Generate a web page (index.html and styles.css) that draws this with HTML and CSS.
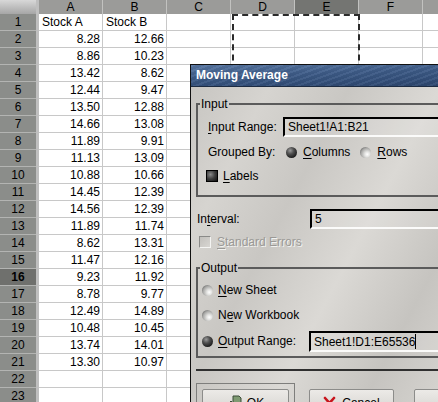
FILE: index.html
```html
<!DOCTYPE html>
<html>
<head>
<meta charset="utf-8">
<link rel="stylesheet" href="styles.css">
</head>
<body>
<div class="sheet">
  <div class="corner"></div><div class="gp"></div>
  <div class="ch">A</div><div class="ch">B</div><div class="ch">C</div><div class="ch">D</div><div class="ch sel">E</div><div class="ch">F</div><div class="ch">G</div>

  <div class="rh">1</div><div class="gp"></div><div class="c">Stock A</div><div class="c">Stock B</div><div class="c"></div><div class="c"></div><div class="c"></div><div class="c"></div><div class="c"></div>
  <div class="rh">2</div><div class="gp"></div><div class="c n">8.28</div><div class="c n">12.66</div><div class="c"></div><div class="c"></div><div class="c"></div><div class="c"></div><div class="c"></div>
  <div class="rh">3</div><div class="gp"></div><div class="c n">8.86</div><div class="c n">10.23</div><div class="c"></div><div class="c"></div><div class="c"></div><div class="c"></div><div class="c"></div>
  <div class="rh">4</div><div class="gp"></div><div class="c n">13.42</div><div class="c n">8.62</div><div class="c"></div><div class="c"></div><div class="c"></div><div class="c"></div><div class="c"></div>
  <div class="rh">5</div><div class="gp"></div><div class="c n">12.44</div><div class="c n">9.47</div><div class="c"></div><div class="c"></div><div class="c"></div><div class="c"></div><div class="c"></div>
  <div class="rh">6</div><div class="gp"></div><div class="c n">13.50</div><div class="c n">12.88</div><div class="c"></div><div class="c"></div><div class="c"></div><div class="c"></div><div class="c"></div>
  <div class="rh">7</div><div class="gp"></div><div class="c n">14.66</div><div class="c n">13.08</div><div class="c"></div><div class="c"></div><div class="c"></div><div class="c"></div><div class="c"></div>
  <div class="rh">8</div><div class="gp"></div><div class="c n">11.89</div><div class="c n">9.91</div><div class="c"></div><div class="c"></div><div class="c"></div><div class="c"></div><div class="c"></div>
  <div class="rh">9</div><div class="gp"></div><div class="c n">11.13</div><div class="c n">13.09</div><div class="c"></div><div class="c"></div><div class="c"></div><div class="c"></div><div class="c"></div>
  <div class="rh">10</div><div class="gp"></div><div class="c n">10.88</div><div class="c n">10.66</div><div class="c"></div><div class="c"></div><div class="c"></div><div class="c"></div><div class="c"></div>
  <div class="rh">11</div><div class="gp"></div><div class="c n">14.45</div><div class="c n">12.39</div><div class="c"></div><div class="c"></div><div class="c"></div><div class="c"></div><div class="c"></div>
  <div class="rh">12</div><div class="gp"></div><div class="c n">14.56</div><div class="c n">12.39</div><div class="c"></div><div class="c"></div><div class="c"></div><div class="c"></div><div class="c"></div>
  <div class="rh">13</div><div class="gp"></div><div class="c n">11.89</div><div class="c n">11.74</div><div class="c"></div><div class="c"></div><div class="c"></div><div class="c"></div><div class="c"></div>
  <div class="rh">14</div><div class="gp"></div><div class="c n">8.62</div><div class="c n">13.31</div><div class="c"></div><div class="c"></div><div class="c"></div><div class="c"></div><div class="c"></div>
  <div class="rh">15</div><div class="gp"></div><div class="c n">11.47</div><div class="c n">12.16</div><div class="c"></div><div class="c"></div><div class="c"></div><div class="c"></div><div class="c"></div>
  <div class="rh sel">16</div><div class="gp"></div><div class="c n">9.23</div><div class="c n">11.92</div><div class="c"></div><div class="c"></div><div class="c"></div><div class="c"></div><div class="c"></div>
  <div class="rh">17</div><div class="gp"></div><div class="c n">8.78</div><div class="c n">9.77</div><div class="c"></div><div class="c"></div><div class="c"></div><div class="c"></div><div class="c"></div>
  <div class="rh">18</div><div class="gp"></div><div class="c n">12.49</div><div class="c n">14.89</div><div class="c"></div><div class="c"></div><div class="c"></div><div class="c"></div><div class="c"></div>
  <div class="rh">19</div><div class="gp"></div><div class="c n">10.48</div><div class="c n">10.45</div><div class="c"></div><div class="c"></div><div class="c"></div><div class="c"></div><div class="c"></div>
  <div class="rh">20</div><div class="gp"></div><div class="c n">13.74</div><div class="c n">14.01</div><div class="c"></div><div class="c"></div><div class="c"></div><div class="c"></div><div class="c"></div>
  <div class="rh">21</div><div class="gp"></div><div class="c n">13.30</div><div class="c n">10.97</div><div class="c"></div><div class="c"></div><div class="c"></div><div class="c"></div><div class="c"></div>
  <div class="rh">22</div><div class="gp"></div><div class="c"></div><div class="c"></div><div class="c"></div><div class="c"></div><div class="c"></div><div class="c"></div><div class="c"></div>
  <div class="rh">23</div><div class="gp"></div><div class="c"></div><div class="c"></div><div class="c"></div><div class="c"></div><div class="c"></div><div class="c"></div><div class="c"></div>
</div>

<div class="marquee"></div>

<div class="dialog">
  <div class="titlebar">Moving Average</div>
  <div class="dbody">
    <fieldset class="frame">
      <legend>Input</legend>
      <div class="fin">
        <div class="frow">
          <span class="lbl w-ir"><u>I</u>nput Range:</span>
          <div class="field">Sheet1!A1:B21</div>
        </div>
        <div class="frow">
          <span class="lbl w-gb">Grouped By:</span>
          <span class="radio on"></span><span class="rtext"><u>C</u>olumns</span>
          <span class="radio off"></span><span class="rtext"><u>R</u>ows</span>
        </div>
        <div class="frow labels">
          <span class="check checked"></span><span class="ctext"><u>L</u>abels</span>
        </div>
      </div>
    </fieldset>

    <div class="frow interval">
      <span class="lbl w-iv">In<u>t</u>erval:</span>
      <div class="field">5</div>
    </div>
    <div class="frow stderr">
      <span class="check disabled"></span><span class="ctext dis"><u>S</u>tandard Errors</span>
    </div>

    <fieldset class="frame out">
      <legend>Output</legend>
      <div class="fout">
        <div class="frow">
          <span class="radio off"></span><span class="otext"><u>N</u>ew Sheet</span>
        </div>
        <div class="frow">
          <span class="radio off"></span><span class="otext">N<u>e</u>w Workbook</span>
        </div>
        <div class="frow last">
          <span class="radio on"></span><span class="otext w-or"><u>O</u>utput Range:</span>
          <div class="field tall">Sheet1!D1:E65536<span class="caret"></span></div>
        </div>
      </div>
    </fieldset>

    <div class="sep"></div>

    <div class="buttons">
      <div class="default-frame">
        <div class="btn ok">
          <svg width="16" height="16" viewBox="0 0 16 16"><path d="M6 1h6l2 2v9H6z" fill="#7f9a72" stroke="#3d4d38" stroke-width="1"/><path d="M1 9l3-3 2 2v6H2z" fill="#9bb38d" stroke="#3d4d38" stroke-width="1"/></svg>
          <span>OK</span>
        </div>
      </div>
      <div class="btn cancel">
        <svg width="13" height="14" viewBox="0 0 13 14"><path d="M2 2l9 10M11 2L2 12" stroke="#c8141c" stroke-width="2.6" stroke-linecap="round"/></svg>
        <span>Cancel</span>
      </div>
      <div class="btn third"></div>
    </div>
  </div>
</div>
</body>
</html>
```

FILE: styles.css
```css
html, body {
  margin: 0;
  padding: 0;
  overflow: hidden;
  background: #fff;
}
body {
  width: 438px;
  height: 402px;
  position: relative;
  font-family: "Liberation Sans", Arial, sans-serif;
  font-size: 12px;
  color: #000;
}

/* ---------- spreadsheet ---------- */
.sheet {
  display: grid;
  grid-template-columns: 36px 3px repeat(7, 64px);
  grid-template-rows: 14px;
  grid-auto-rows: 17px;
}
.corner {
  background: linear-gradient(#d8d8d8, #a6a6a6);
}
.gp {
  background: #bfbfbf;
}
.ch {
  background: #9b9b99;
  border-right: 1px solid #c2c2c0;
  text-align: center;
  line-height: 14px;
  box-sizing: border-box;
}
.ch.sel {
  background: #747572;
}
.rh {
  background: #8b8d8a;
  border-bottom: 1px solid #b3b4b2;
  text-align: center;
  line-height: 16px;
  box-sizing: border-box;
}
.rh.sel {
  background: #6f706d;
  font-weight: bold;
}
.c {
  border-right: 1px solid #c8c8c8;
  border-bottom: 1px solid #c8c8c8;
  box-sizing: border-box;
  line-height: 16px;
  padding: 0 2px 0 3px;
  white-space: nowrap;
  overflow: hidden;
}
.c.n {
  text-align: right;
}

.marquee {
  position: absolute;
  left: 232px;
  top: 14px;
  width: 128px;
  height: 400px;
  box-sizing: border-box;
  border: 2px dashed #2b2b2b;
}

/* ---------- dialog ---------- */
.dialog {
  position: absolute;
  left: 190px;
  top: 64px;
  width: 300px;
  height: 380px;
  overflow: hidden;
  border-left: 1px solid #111;
  border-top: 1px solid #111;
  background: linear-gradient(118deg, #c5c3bf 0%, #d6d4d0 18%, #c9c7c3 34%, #dbd9d5 52%, #c6c4c0 70%, #d6d4d0 86%, #cac8c4 100%);
}
.titlebar {
  height: 21px;
  border-bottom: 1px solid #1c2b42;
  background:
    repeating-linear-gradient(160deg, rgba(255,255,255,0.05) 0 2px, rgba(0,0,0,0.05) 2px 5px),
    linear-gradient(178deg, #5877a3 0%, #3e5c88 40%, #34507b 70%, #2b456c 100%);
  color: #fff;
  font-weight: bold;
  line-height: 21px;
  padding-left: 5px;
}
.dbody {
  padding: 10px 0 0 5px;
  display: flex;
  flex-direction: column;
}
.frame {
  margin: 0;
  width: 280px;
  box-sizing: border-box;
  border: 2px solid #5b5b5b;
  padding: 6px 0 9px 2px;
  min-width: 0;
}
.frame legend {
  padding: 0 1px;
  margin: 0;
  line-height: 14px;
}
.fin {
  padding-left: 8px;
  display: flex;
  flex-direction: column;
  gap: 5px;
}
.frow.labels {
  margin-top: -1px;
}
.frame.out {
  margin-top: 9px;
  padding: 5px 0 4px 2px;
}
.fout {
  padding-left: 2px;
  display: flex;
  flex-direction: column;
  gap: 5px;
}
.frow {
  display: flex;
  align-items: center;
  height: 20px;
  white-space: nowrap;
}
.frow > * {
  flex: none;
}
.frow.last {
  height: 22px;
}
.w-ir { width: 75px; }
.w-gb { width: 78px; }
.w-iv { width: 113px; padding-left: 1px; }
.w-or { width: 91px; }

u {
  text-decoration: underline;
  text-underline-offset: 2px;
}

.field {
  width: 220px;
  height: 20px;
  box-sizing: border-box;
  border-top: 2px solid #000;
  border-left: 2px solid #000;
  border-bottom: 2px solid #fbfbfa;
  background: rgba(255, 255, 255, 0.12);
  padding-left: 3px;
  line-height: 17px;
}
.field.tall {
  height: 21px;
  line-height: 18px;
}
.caret {
  display: inline-block;
  width: 1px;
  height: 15px;
  background: #000;
  vertical-align: -3px;
}

.radio {
  width: 11px;
  height: 11px;
  border-radius: 50%;
  box-sizing: border-box;
}
.radio.on {
  background: radial-gradient(circle at 38% 32%, #9a9a9a 0, #505050 35%, #1c1c1c 75%, #000 100%);
}
.radio.off {
  background: radial-gradient(circle at 66% 66%, #ffffff 0, #e2e2e0 25%, #a8a8a6 60%, #5a5a5a 90%, #3a3a3a 100%);
}
.fin .radio {
  margin-right: 6px;
}
.rtext {
  margin-right: 10px;
}
.fout .radio {
  margin-right: 5px;
}

.check {
  box-sizing: border-box;
}
.check.checked {
  width: 12px;
  height: 12px;
  margin-left: -2px;
  margin-right: 5px;
  border: 1px solid #000;
  background: radial-gradient(circle at 35% 35%, #8a8a8a 0, #3c3c3c 50%, #111 100%);
}
.check.disabled {
  width: 12px;
  height: 12px;
  margin-left: 3px;
  margin-right: 6px;
  border-top: 1px solid #8a8a88;
  border-left: 1px solid #8a8a88;
  border-right: 1px solid #f4f4f2;
  border-bottom: 1px solid #f4f4f2;
  background: linear-gradient(135deg, #c2c0bc, #d8d6d2);
}
.ctext.dis {
  color: #9a9996;
  text-shadow: 1px 1px 0 #f2f2f0;
}

.interval {
  margin-top: 12px;
}
.stderr {
  margin-top: 3px;
}

.sep {
  margin-top: 11px;
  height: 2px;
  width: 280px;
  background: #2f2f2f;
}

.buttons {
  margin-top: 12px;
  display: flex;
  align-items: flex-start;
}
.default-frame {
  width: 99px;
  height: 40px;
  box-sizing: border-box;
  border: 1px solid #7e7e7c;
  padding: 5px;
}
.btn {
  height: 28px;
  box-sizing: border-box;
  border: 1px solid #8c8c8a;
  border-radius: 2px;
  background: linear-gradient(#eceae7, #d2d0cc);
  display: flex;
  align-items: center;
  justify-content: center;
  gap: 4px;
}
.btn.ok {
  width: 87px;
}
.btn.cancel {
  width: 88px;
  margin-left: 14px;
  margin-top: 6px;
  gap: 6px;
}
.btn.third {
  width: 80px;
  margin-left: 20px;
  margin-top: 6px;
}
.btn svg {
  flex: none;
}
```
